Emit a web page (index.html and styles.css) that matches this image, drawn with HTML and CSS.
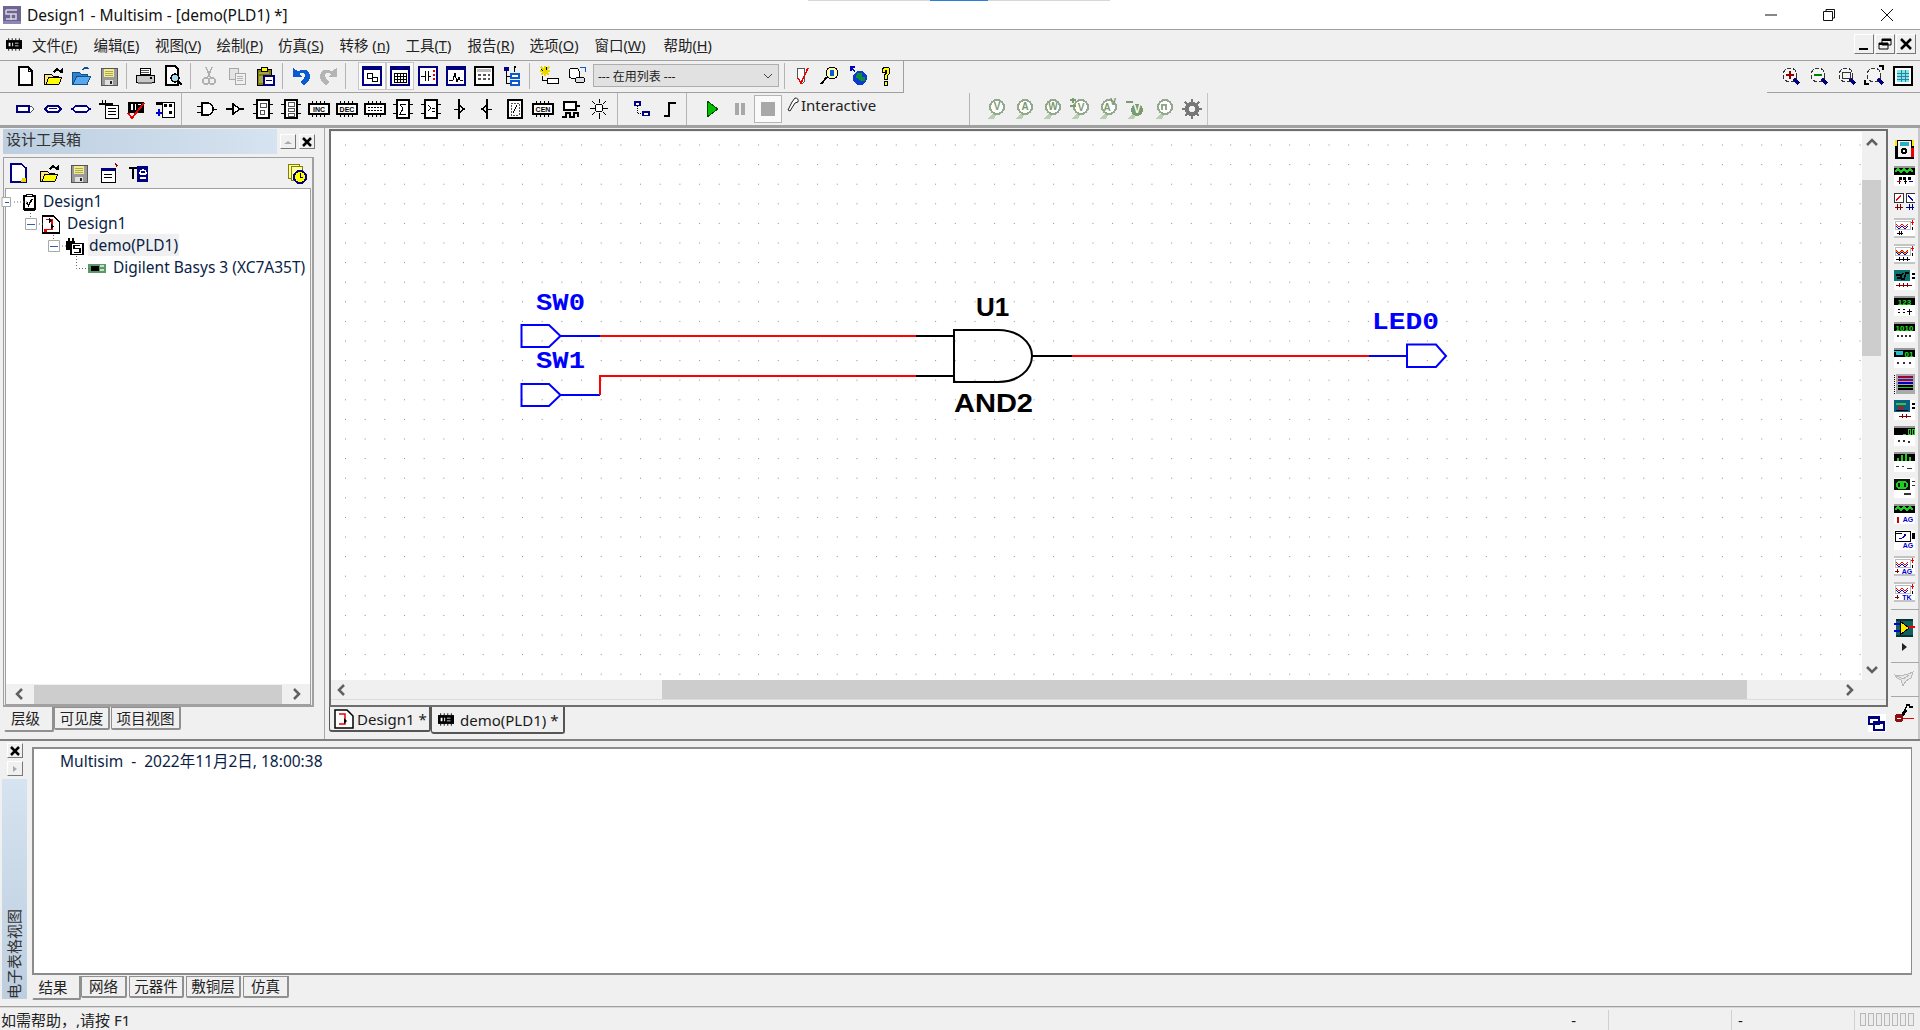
FILE: index.html
```html
<!DOCTYPE html>
<html lang="zh-CN">
<head>
    <meta charset="UTF-8">
    <title>Design1 - Multisim - [demo(PLD1) *]</title>
    <link rel="stylesheet" href="styles.css">
</head>
<body>
    <!-- shared toolbar glyphs -->
    <svg class="icon-defs" width="0" height="0">
        <symbol id="i-new" viewBox="0 0 22 22"><path d="M5 2h9l4 4v14H5z" fill="#fff" stroke="#000" stroke-width="1.5"/><path d="M14 2v4h4" fill="none" stroke="#000"/></symbol>
        <symbol id="i-open" viewBox="0 0 22 22"><path d="M2 9h7l2 2h5v8H2z" fill="#ffe680" stroke="#000"/><path d="M4 19l3-7h13l-3 7z" fill="#ffff00" stroke="#000"/><path d="M11 6l4-3 3 2 3-2v5h-4l1-1-3-1-3 2z" fill="#000"/></symbol>
        <symbol id="i-open-blue" viewBox="0 0 22 22"><path d="M2 7h7l2 2h6v10H2z" fill="#2f7fd0" stroke="#10508c"/><path d="M3 19l4-8h14l-4 8z" fill="#58a8f0" stroke="#10508c"/><path d="M12 5q4-4 7-1" fill="none" stroke="#10508c" stroke-width="1.5"/></symbol>
        <symbol id="i-save" viewBox="0 0 22 22"><path d="M3 3h16v17H3z" fill="#9a9a9a" stroke="#555"/><path d="M6 4h10v8H6z" fill="#f2ee90"/><path d="M7 6h8M7 8h8M7 10h8" stroke="#b0a850"/><path d="M7 15h8v5H7z" fill="#e0e0e0"/><path d="M12 16h2v3h-2z" fill="#222"/></symbol>
        <symbol id="i-print" viewBox="0 0 22 22"><path d="M6 3h10v6H6z" fill="#fff" stroke="#000"/><path d="M2 10h18v7H2z" fill="#c8c8c8" stroke="#000"/><path d="M4 17h14v2H4z" fill="#777"/><path d="M7 5h8M7 7h8" stroke="#555"/><path d="M16 12h2v2h-2z" fill="#000"/></symbol>
        <symbol id="i-preview" viewBox="0 0 22 22"><path d="M4 1h9l3 3v16H4z" fill="#fff" stroke="#000" stroke-width="1.5"/><circle cx="13" cy="13" r="4" fill="#a8d8f0" stroke="#000" stroke-width="1.5"/><path d="M16 16l4 4" stroke="#000" stroke-width="2"/></symbol>
        <symbol id="i-cut" viewBox="0 0 22 22"><path d="M8 2l4 10M14 2l-4 10" stroke="#b0b0b0" stroke-width="1.5"/><circle cx="8" cy="16" r="3" fill="none" stroke="#b0b0b0" stroke-width="1.5"/><circle cx="14" cy="16" r="3" fill="none" stroke="#b0b0b0" stroke-width="1.5"/></symbol>
        <symbol id="i-copy" viewBox="0 0 22 22"><path d="M3 3h9v11H3z" fill="#e4e4e4" stroke="#a8a8a8"/><path d="M9 8h10v11H9z" fill="#f0f0f0" stroke="#a8a8a8"/><path d="M11 11h6M11 13h6M11 15h6" stroke="#b4b4b4"/></symbol>
        <symbol id="i-paste" viewBox="0 0 22 22"><path d="M3 4h14v16H3z" fill="#808000" stroke="#000"/><path d="M7 2h6v4H7z" fill="#ffff00" stroke="#000"/><path d="M5 7h10v2H5zM5 11h5v7H5z" fill="#a6a650"/><path d="M10 11h10v9H10z" fill="#fff" stroke="#000080" stroke-width="2"/><path d="M12 15h6" stroke="#000080"/></symbol>
        <path id="p-undo" d="M3 3v9h9l-3-3q5-3 6 1 0 4-5 7l4 3q7-4 6-10-2-8-12-4z"/>
        <symbol id="i-undo" viewBox="0 0 22 22"><use href="#p-undo" fill="#0a5ad2"/></symbol>
        <symbol id="i-redo" viewBox="0 0 22 22"><use href="#p-undo" fill="#b4b4b4" transform="matrix(-1 0 0 1 22 0)"/></symbol>
        <symbol id="i-frame" viewBox="0 0 22 22"><path d="M2 2h18v18H2z" fill="#fff" stroke="#000080" stroke-width="2"/><path d="M2 2h18v3H2z" fill="#000080"/></symbol>
        <symbol id="i-zoom" viewBox="0 0 22 22"><circle cx="10" cy="10" r="7" fill="#f4f4f4" stroke="#333" stroke-dasharray="4 2"/><path d="M14 14l5 5" stroke="#000080" stroke-width="3"/></symbol>
        <symbol id="i-bus" viewBox="0 0 22 22"><path d="M3 8h14l3 3-3 3H3z" fill="#fff" stroke="#555"/><path d="M3 8h12v6H3z" fill="none" stroke="#000080" stroke-width="2"/></symbol>
        <symbol id="i-box" viewBox="0 0 22 22"><path d="M5 2h12v18H5z" fill="#fff" stroke="#000" stroke-width="1.5"/><path d="M1 6h4M1 15h4M17 6h4M17 15h4" stroke="#000"/></symbol>
        <symbol id="i-chip" viewBox="0 0 22 22"><path d="M1 6h20v10H1z" fill="#fff" stroke="#000" stroke-width="1.5"/><path d="M4 3v3M8 3v3M12 3v3M16 3v3M4 16v3M8 16v3M12 16v3M16 16v3" stroke="#000"/></symbol>
        <symbol id="i-mos" viewBox="0 0 22 22"><path d="M11 1v20M11 7l5 4-5 4" fill="none" stroke="#000" stroke-width="1.5"/><path d="M6 11h5" stroke="#000"/></symbol>
        <symbol id="i-probe" viewBox="0 0 22 22"><path d="M2 21l5-5h5l-3 5z" fill="#b6d0b0"/><circle cx="12" cy="9" r="7" fill="#fff" stroke="#94a890" stroke-width="2"/></symbol>
        <symbol id="i-wave" viewBox="0 0 21 20"><path d="M0 0h21v20H0z" fill="#fff"/><path d="M0 0h21v2H0zM0 18h21v2H0z" fill="#c4c4c4"/><path d="M1 3h15v8H1z" fill="#fff" stroke="#bbb"/><path d="M2 6l3 3 3-3 3 3 3-3" fill="none" stroke="#e00" stroke-width="1"/><path d="M2 8l3 3 3-3 3 3 3-3" fill="none" stroke="#00c"/><path d="M17 4h3v1h-3zM18 2h1v5h-1z" fill="#e00"/><path d="M18 9h1v3h-1z" fill="#000"/></symbol>
        <symbol id="i-scope" viewBox="0 0 21 20"><path d="M0 0h21v20H0z" fill="#fff"/><path d="M0 0h21v2H0z" fill="#999"/><path d="M0 2h21v7H0z" fill="#000"/></symbol>
    </svg>

    <div class="title-tick"><span></span></div>

    <header class="titlebar">
        <svg class="app-icon" viewBox="0 0 18 18"><path d="M0 0h18v18H0z" fill="#6e6690"/><path d="M3 4h11M3 4v4h10v5H3M8 8v6" fill="none" stroke="#d8d6e6" stroke-width="1.5"/><path d="M0 15h18v3H0z" fill="#8e86b4"/></svg>
        <span class="title-text">Design1 - Multisim - [demo(PLD1) *]</span>
        <div class="win-buttons">
            <svg viewBox="0 0 14 14"><path d="M1 7h12" stroke="#111"/></svg>
            <svg viewBox="0 0 14 14"><path d="M1.500 3.500h9v9h-9zM4 3V1.500h8.500V10H11" fill="none" stroke="#111"/></svg>
            <svg viewBox="0 0 14 14"><path d="M1 1l12 12M13 1L1 13" stroke="#111"/></svg>
        </div>
    </header>

    <nav class="menubar">
        <svg class="menu-icon" viewBox="0 0 18 14"><path d="M0 2h18v10H0z" fill="#000"/><path d="M3 0v2M7 0v2M11 0v2M15 0v2M3 12v2M7 12v2M11 12v2M15 12v2" stroke="#000"/><path d="M3 5h2v4H3zM7 5h1v4H7zM10 5h4v1h-4zM10 8h4v1h-4z" fill="#fff"/></svg>
        <span class="menu-item">文件(<u>F</u>)</span>
        <span class="menu-item">编辑(<u>E</u>)</span>
        <span class="menu-item">视图(<u>V</u>)</span>
        <span class="menu-item">绘制(<u>P</u>)</span>
        <span class="menu-item">仿真(<u>S</u>)</span>
        <span class="menu-item w66">转移 (<u>n</u>)</span>
        <span class="menu-item w62">工具(<u>T</u>)</span>
        <span class="menu-item w62">报告(<u>R</u>)</span>
        <span class="menu-item w65">选项(<u>O</u>)</span>
        <span class="menu-item w69">窗口(<u>W</u>)</span>
        <span class="menu-item">帮助(<u>H</u>)</span>
        <div class="mdi-buttons">
            <button><svg viewBox="0 0 16 14"><path d="M3 11h9v2H3z" fill="#000"/></svg></button>
            <button><svg viewBox="0 0 16 14"><path d="M5 2h9v6h-9zM2 6h9v6H2z" fill="#f0f0f0" stroke="#000"/><path d="M5 2h9v2h-9zM2 6h9v2H2z" fill="#000"/></svg></button>
            <button><svg viewBox="0 0 16 14"><path d="M3 2l10 10M13 2L3 12" stroke="#000" stroke-width="2.500"/></svg></button>
        </div>
    </nav>

    <div class="tool-row">
        <div class="toolstrip strip-main">
            <span class="tb"><svg><use href="#i-new"/></svg></span>
            <span class="tb"><svg><use href="#i-open"/></svg></span>
            <span class="tb"><svg><use href="#i-open-blue"/></svg></span>
            <span class="tb"><svg><use href="#i-save"/></svg></span>
            <span class="sep"></span>
            <span class="tb"><svg><use href="#i-print"/></svg></span>
            <span class="tb"><svg><use href="#i-preview"/></svg></span>
            <span class="sep"></span>
            <span class="tb"><svg><use href="#i-cut"/></svg></span>
            <span class="tb"><svg><use href="#i-copy"/></svg></span>
            <span class="tb"><svg><use href="#i-paste"/></svg></span>
            <span class="sep"></span>
            <span class="tb"><svg><use href="#i-undo"/></svg></span>
            <span class="tb"><svg><use href="#i-redo"/></svg></span>
            <span class="sep sep-wide"></span>
            <span class="tb pressed"><svg><use href="#i-frame"/><path d="M6 8h5v5H6zM11 12h5v4h-5z" fill="none" stroke="#000"/></svg></span>
            <span class="tb pressed"><svg><use href="#i-frame"/><path d="M5 8h12v9H5zM5 11h12M5 14h12M8 8v9M11 8v9M14 8v9" fill="none" stroke="#000"/></svg></span>
            <span class="tb"><svg><path d="M2 2h18v18H2z" fill="#fff" stroke="#000080" stroke-width="2"/><path d="M8 6v10M11 6v10M4 11h4M11 11h3" stroke="#000"/><path d="M16 5h2v2h-2zM16 9h2v2h-2zM16 13h2v2h-2z" fill="#e00"/></svg></span>
            <span class="tb"><svg><use href="#i-frame"/><path d="M4 15h4l2-7 2 9 2-5 1 3h3" fill="none" stroke="#000"/></svg></span>
            <span class="tb"><svg><path d="M2 2h18v18H2z" fill="#fff" stroke="#000" stroke-width="2"/><path d="M4 4h14v3H4z" fill="#bbb"/><path d="M5 9h3v2H5zM10 9h3v2h-3zM15 9h2v2h-2zM5 13h3v2H5zM10 13h3v2h-3zM15 13h2v2h-2z" fill="#555"/></svg></span>
            <span class="tb"><svg><path d="M3 2h5v4H3z" fill="#000080"/><path d="M5 6v12h5M5 11h5" fill="none" stroke="#000"/><path d="M10 9h8v4h-8zM10 16h8v4h-8z" fill="#fff" stroke="#0a5ad2" stroke-width="1.500"/><path d="M13 2v5M15 2l-2-1v3z" stroke="#000"/></svg></span>
            <span class="sep sep-combo"></span>
            <span class="tb"><svg><path d="M2 6h10M7 1v10M3 2l8 8M11 2l-8 8" stroke="#e8d800" stroke-width="1.500"/><path d="M3 4l2 2M8 2v3" stroke="#000"/><path d="M9 13h11v5H9z" fill="#fff" stroke="#000"/><path d="M4 11v4h5" fill="none" stroke="#000"/></svg></span>
            <span class="tb"><svg><ellipse cx="8" cy="6" rx="5" ry="3" fill="#fff" stroke="#000"/><path d="M3 6v6q5 4 10 0V6" fill="#fff" stroke="#000"/><ellipse cx="14" cy="15" rx="5" ry="3" fill="#ddd" stroke="#000"/><path d="M14 2h5v5" fill="none" stroke="#0a5ad2"/></svg></span>
            <span class="combo"><span>--- 在用列表 ---</span><svg viewBox="0 0 10 6"><path d="M1 1l4 4 4-4" fill="none" stroke="#444"/></svg></span>
            <span class="sep sep-tight"></span>
            <span class="tb"><svg><path d="M6 3h8l-1 8 1 5-3 3-4-5z" fill="#fff" stroke="#555"/><path d="M7 13l3 5 7-15" fill="none" stroke="#e00" stroke-width="1.500"/></svg></span>
            <span class="tb"><svg><circle cx="13" cy="8" r="6" fill="#ffffb0" stroke="#000"/><path d="M11 5h4v6h-4z" fill="#0a5ad2"/><path d="M8 12l-6 7" stroke="#000" stroke-width="2"/></svg></span>
            <span class="tb"><svg><circle cx="13" cy="13" r="7" fill="#0a3ad0"/><path d="M10 8h5v4h3v4h-5l-2-3h-2z" fill="#0a9030"/><path d="M3 2l5 4M4 6V2h4" fill="none" stroke="#0000c0" stroke-width="1.500"/></svg></span>
            <span class="tb"><svg><path d="M7 7q0-5 4-5t4 4q0 3-3 5v3h-3v-4q3-1 3-4 0-1-1-1t-1 2zM9 16h3v4H9z" fill="#ffff00" stroke="#000"/></svg></span>
        </div>
        <div class="toolstrip strip-zoom">
            <span class="tb"><svg><use href="#i-zoom"/><path d="M6 9h8v2H6zM9 6h2v8H9z" fill="#900000"/></svg></span>
            <span class="tb"><svg><use href="#i-zoom"/><path d="M6 9h8v2H6z" fill="#008000"/></svg></span>
            <span class="tb"><svg><use href="#i-zoom"/><path d="M6 7h8v6H6z" fill="none" stroke="#333"/></svg></span>
            <span class="tb"><svg><use href="#i-zoom"/><path d="M1 15v4h4M15 1h4v4" fill="none" stroke="#000" stroke-width="1.500"/></svg></span>
            <span class="tb"><svg><path d="M2 2h18v18H2z" fill="#fff" stroke="#000" stroke-width="2"/><path d="M5 5h12v12H5z" fill="#7ce8ec"/><path d="M5 8h12M5 11h12M5 14h12M9 5v12M13 5v12" stroke="#3080a0"/></svg></span>
        </div>
    </div>

    <div class="tool-row">
        <div class="toolstrip strip-place">
            <span class="tb"><svg><use href="#i-bus"/></svg></span>
            <span class="tb"><svg><path d="M3 11l3-3h10l3 3-3 3H6z" fill="#fff" stroke="#000080" stroke-width="1.500"/><path d="M7 10h8" stroke="#000080"/></svg></span>
            <span class="tb"><svg><path d="M2 11l4-3h10l4 3-4 3H6z" fill="#fff" stroke="#000080" stroke-width="1.500"/></svg></span>
            <span class="tb"><svg><path d="M1 5h14v2H1z" fill="#000"/><path d="M7 7h13v13H7z" fill="#fff" stroke="#000"/><path d="M10 10h8M10 13h8M10 16h8" stroke="#000"/><path d="M4 2v3M7 2v3" stroke="#000"/></svg></span>
            <span class="tb"><svg><path d="M2 4h16v11H2z" fill="#000"/><path d="M5 6h2v6H5zM9 6h1v6H9zM12 6h3v1h-3zM12 10h3v1h-3z" fill="#fff"/><path d="M2 15l4 5 12-15" fill="none" stroke="#e00" stroke-width="2"/></svg></span>
            <span class="tb"><svg><path d="M8 4h12v15H8z" fill="#fff" stroke="#000"/><path d="M2 4h6v3H2zM10 6h3v3h-3zM15 6h3v3h-3zM15 13h3v3h-3z" fill="#000"/><path d="M5 11v7M2 15h6" stroke="#0000d0" stroke-width="1.500"/></svg></span>
            <span class="sep sep-gap"></span>
            <span class="tb"><svg><path d="M6 5h5q6 0 6 6t-6 6H6z" fill="#fff" stroke="#000" stroke-width="1.500"/><path d="M1 8h5M1 14h5M17 11h4" stroke="#000"/></svg></span>
            <span class="tb"><svg><path d="M9 6l7 5-7 5z" fill="#fff" stroke="#000" stroke-width="1.500"/><path d="M2 11h7M16 11h4" stroke="#000" stroke-width="1.500"/></svg></span>
            <span class="tb"><svg><use href="#i-box"/><path d="M8 5h6v4H8zM8 12h4v4H8z" fill="none" stroke="#555"/></svg></span>
            <span class="tb"><svg><use href="#i-box"/><path d="M8 4h6v4H8zM8 10h6v3H8zM8 15h6v3H8z" fill="none" stroke="#555"/></svg></span>
            <span class="tb"><svg><use href="#i-chip"/><text class="chip-text" x="11" y="14">INC</text></svg></span>
            <span class="tb"><svg><use href="#i-chip"/><text class="chip-text" x="11" y="14">DEC</text></svg></span>
            <span class="tb"><svg><use href="#i-chip"/><path d="M4 9h14M4 12h14" stroke="#000" stroke-dasharray="2 1"/></svg></span>
            <span class="tb"><svg><use href="#i-box"/><path d="M14 6H8l3 5-3 5h6" fill="none" stroke="#000"/></svg></span>
            <span class="tb"><svg><use href="#i-box"/><path d="M8 7l3 3-3 3M12 10h3M12 13h3" fill="none" stroke="#000"/></svg></span>
            <span class="tb"><svg><use href="#i-mos"/></svg></span>
            <span class="tb"><svg><use href="#i-mos" transform="matrix(-1 0 0 1 22 0)"/></svg></span>
            <span class="tb"><svg><path d="M4 2h14v18H4z" fill="#fff" stroke="#000" stroke-width="1.500"/><path d="M7 5h8v12H7z" fill="none" stroke="#555" stroke-dasharray="2 1"/><path d="M9 15l4-8" stroke="#000"/></svg></span>
            <span class="tb"><svg><use href="#i-chip"/><text class="chip-text" x="11" y="14">CEN</text></svg></span>
            <span class="tb"><svg><path d="M4 4h12v8H4zM16 8h4" fill="#fff" stroke="#000" stroke-width="1.500"/><path d="M2 19h4v-4h4v4h4v-4h4v4" fill="none" stroke="#000" stroke-width="1.500"/></svg></span>
            <span class="tb"><svg><circle cx="11" cy="10" r="4" fill="#fff" stroke="#000"/><path d="M11 1v4M11 15v6M2 10h5M15 10h5M4 3l3 3M18 3l-3 3M4 17l3-3M18 17l-3-3" stroke="#000"/></svg></span>
            <span class="sep sep-gap2"></span>
            <span class="tb"><svg><path d="M3 3h7v5H3z" fill="#000080"/><path d="M5 5h3v2H5z" fill="#fff"/><path d="M11 13h8v5h-8z" fill="#000080"/><path d="M13 15h4v2h-4z" fill="#fff"/><path d="M6 8v7h5" fill="none" stroke="#000" stroke-dasharray="1 1"/></svg></span>
            <span class="tb"><svg><path d="M5 18h5V5h7" fill="none" stroke="#000" stroke-width="2.500"/></svg></span>
            <span class="sep sep-gap"></span>
            <span class="tb"><svg><path d="M6 3l11 8-11 8z" fill="#00c000" stroke="#005000"/></svg></span>
            <span class="tb"><svg><path d="M6 5h4v12H6zM12 5h4v12h-4z" fill="#a8a8a8"/></svg></span>
            <span class="tb pressed stop"><svg><path d="M4 4h14v14H4z" fill="#a8a8a8"/></svg></span>
            <span class="interactive">
                <svg viewBox="0 0 14 16"><path d="M9 1q4 0 3 4l-3 1-5 8-2-1 4-8z" fill="#fff" stroke="#222"/></svg>
                <span>Interactive</span>
            </span>
            <span class="sep sep-gap3"></span>
            <span class="tb"><svg><use href="#i-probe"/><text class="probe-text" x="12" y="12">V</text></svg></span>
            <span class="tb"><svg><use href="#i-probe"/><text class="probe-text" x="12" y="12">A</text></svg></span>
            <span class="tb"><svg><use href="#i-probe"/><text class="probe-text" x="12" y="12">W</text></svg></span>
            <span class="tb"><svg><use href="#i-probe"/><text class="probe-text" x="12" y="13">V</text><path d="M1 2h6M4 0v5M1 8h6" stroke="#7a9a70" stroke-width="1.500"/></svg></span>
            <span class="tb"><svg><use href="#i-probe"/><text class="probe-text" x="10" y="13">A</text><text class="probe-text" x="16" y="7">V</text></svg></span>
            <span class="tb"><svg><path d="M2 21l5-5h5l-3 5z" fill="#b6d0b0"/><circle cx="12" cy="12" r="6" fill="#7a9a70"/><text class="probe-text light" x="12" y="15">V</text><path d="M1 4h7" stroke="#7a9a70" stroke-width="1.500"/></svg></span>
            <span class="tb"><svg><use href="#i-probe"/><path d="M9 12V7h4v5" fill="none" stroke="#94a890" stroke-width="1.500"/></svg></span>
            <span class="tb"><svg><circle cx="11" cy="11" r="5" fill="none" stroke="#777" stroke-width="4"/><path d="M11 1v4M11 17v4M1 11h4M17 11h4M4 4l3 3M18 4l-3 3M4 18l3-3M18 18l-3-3" stroke="#777" stroke-width="2.500"/></svg></span>
        </div>
    </div>

    <main class="workspace">
        <aside class="toolbox">
            <div class="toolbox-head">
                <div class="toolbox-title">设计工具箱</div>
                <button class="mini disabled"><svg viewBox="0 0 12 10"><path d="M2 7l4-3 4 3z" fill="#aaa"/></svg></button>
                <button class="mini"><svg viewBox="0 0 12 10"><path d="M2 1l8 8M10 1L2 9" stroke="#000" stroke-width="2.500"/></svg></button>
            </div>
            <div class="toolbox-box">
                <div class="toolbox-icons">
                    <span class="tb"><svg><path d="M3 2h10l5 4v14H3z" fill="#fff" stroke="#000080" stroke-width="1.500"/><path d="M14 16h4v4h-5z" fill="#e8d800"/></svg></span>
                    <span class="tb"><svg><use href="#i-open"/></svg></span>
                    <span class="tb"><svg><use href="#i-save"/></svg></span>
                    <span class="tb"><svg><path d="M3 6h14v14H3z" fill="#fff" stroke="#000"/><path d="M3 6h14v3H3z" fill="#000080"/><path d="M6 12h8M6 15h8" stroke="#000"/><path d="M17 1l3 3-2 1z" fill="#a00000"/></svg></span>
                    <span class="tb"><svg><path d="M9 4h11v16H9z" fill="#000080"/><path d="M1 5h8v2H6v10H4V7H1z" fill="#000"/><path d="M12 12h6M12 12q0-4 3-4t3 4M18 16h-6" fill="none" stroke="#fff" stroke-width="1.500"/></svg></span>
                    <span class="tb tb-end"><svg><path d="M2 2h11v14H2z" fill="#ffffa0" stroke="#808000"/><path d="M5 4h11v14H5z" fill="#ffffa0" stroke="#808000"/><circle cx="14" cy="15" r="6" fill="#ffff00" stroke="#000080" stroke-width="2"/><path d="M14 11v4h3" fill="none" stroke="#000"/></svg></span>
                </div>
                <div class="tree">
                    <svg class="tree-lines" width="120" height="100">
                        <path class="dots" d="M8 14h14M24.500 25v5M30 36h9M47.500 47v5M53 58h9M70.500 68v12.500h14"/>
                        <path class="exp" d="M-4 9.500h8.500v9H-4zM19.500 30.500h11v11h-11zM42.500 52.500h11v11h-11z"/>
                        <path class="minus" d="M-1 14.500h4M21 36.500h8M44 58.500h8"/>
                    </svg>
                    <div class="tree-row lv0">
                        <svg viewBox="0 0 18 20"><path d="M3 3h12v14H3z" fill="#fff" stroke="#000" stroke-width="1.500"/><path d="M6 1h6v3H6z" fill="#fff" stroke="#000"/><path d="M3 17h12v2H3z" fill="#000"/><path d="M6 10l2 3 4-7" fill="none" stroke="#000" stroke-width="1.500"/></svg>
                        <span>Design1</span>
                    </div>
                    <div class="tree-row lv1">
                        <svg viewBox="0 0 20 20"><path d="M1 1h12l6 6v12H1z" fill="#fff" stroke="#000" stroke-width="1.500"/><path d="M5 5h6v10H5" fill="none" stroke="#e00" stroke-width="1.500"/><path d="M8 3l3 3-3 3zM10 9l3 3-3 3z" fill="#000"/><path d="M3 15h3v3H3z" fill="#e00"/></svg>
                        <span>Design1</span>
                    </div>
                    <div class="tree-row lv2 selected">
                        <svg viewBox="0 0 18 18"><path d="M0 3h9v9H0z" fill="#000"/><path d="M3 0v3M7 0v3" stroke="#000" stroke-width="1.500"/><path d="M5 6h12v11H5z" fill="#fff" stroke="#000" stroke-width="1.500"/><path d="M14 8H8v3h6v4H8" fill="none" stroke="#000" stroke-width="1.500"/></svg>
                        <span>demo(PLD1)</span>
                    </div>
                    <div class="tree-row lv3">
                        <svg viewBox="0 0 20 14"><path d="M0 2h20v11H0z" fill="#5a9a6a"/><path d="M3 5h9v6H3z" fill="#000"/><path d="M14 4h4v2h-4zM14 8h4v2h-4z" fill="#c8e0c0"/></svg>
                        <span>Digilent Basys 3 (XC7A35T)</span>
                    </div>
                    <div class="h-scroll tree-scroll">
                        <svg class="arrow" viewBox="0 0 10 14"><path d="M8 2L3 7l5 5" fill="none" stroke="#606060" stroke-width="2.500"/></svg>
                        <div class="thumb"></div>
                        <svg class="arrow" viewBox="0 0 10 14"><path d="M2 2l5 5-5 5" fill="none" stroke="#606060" stroke-width="2.500"/></svg>
                    </div>
                </div>
            </div>
            <div class="sheet-tabs toolbox-tabs">
                <span class="tab active">层级</span>
                <span class="tab">可见度</span>
                <span class="tab">项目视图</span>
            </div>
        </aside>

        <section class="editor">
            <div class="canvas-frame">
                <svg class="canvas" width="1531" height="548">
                    <defs>
                        <pattern id="grid-dots" x="14" y="12.500" width="19.670" height="19.600" patternUnits="userSpaceOnUse">
                            <rect width="1" height="1" fill="#8c8c8c"/>
                        </pattern>
                    </defs>
                    <rect width="1531" height="548" fill="#fff"/>
                    <rect width="1531" height="548" fill="url(#grid-dots)"/>
                    <g transform="translate(-331 -132)" fill="none" stroke-width="2">
                        <path d="M521.500 325H549L560.500 336 549 347H521.500zM521.500 384H549L560.500 395 549 406H521.500zM1407 344.500H1436L1446 356 1436 367H1407z" stroke="#0000ff"/>
                        <path d="M560 336H600M560 395H600M1369 356H1407" stroke="#0000ff"/>
                        <path d="M600 336H916M600 395V376H916M1072 356H1369" stroke="#ff0000"/>
                        <path d="M916 336H954M916 376H954M1032 356H1072" stroke="#000"/>
                        <path d="M954 330H998C1018 330 1032 342 1032 356S1018 382 998 382H954Z" stroke="#000"/>
                        <g class="net-label">
                            <text x="536" y="310" textLength="49" lengthAdjust="spacingAndGlyphs">SW0</text>
                            <text x="536" y="368" textLength="49" lengthAdjust="spacingAndGlyphs">SW1</text>
                            <text x="1372" y="329" textLength="67" lengthAdjust="spacingAndGlyphs">LED0</text>
                        </g>
                        <g class="part-label">
                            <text x="976" y="316">U1</text>
                            <text x="954" y="412" textLength="79" lengthAdjust="spacingAndGlyphs">AND2</text>
                        </g>
                    </g>
                </svg>
                <div class="v-scroll">
                    <svg class="arrow" viewBox="0 0 14 10"><path d="M2 8l5-5 5 5" fill="none" stroke="#606060" stroke-width="2.500"/></svg>
                    <div class="thumb"></div>
                    <svg class="arrow arrow-down" viewBox="0 0 14 10"><path d="M2 2l5 5 5-5" fill="none" stroke="#606060" stroke-width="2.500"/></svg>
                </div>
                <div class="h-scroll canvas-scroll">
                    <svg class="arrow" viewBox="0 0 10 14"><path d="M8 2L3 7l5 5" fill="none" stroke="#606060" stroke-width="2.500"/></svg>
                    <div class="thumb"></div>
                    <svg class="arrow" viewBox="0 0 10 14"><path d="M2 2l5 5-5 5" fill="none" stroke="#606060" stroke-width="2.500"/></svg>
                </div>
            </div>
            <div class="sheet-tabs design-tabs">
                <span class="doc-tab">
                    <svg viewBox="0 0 20 20"><path d="M1 1h12l6 6v12H1z" fill="#fff" stroke="#000" stroke-width="1.500"/><path d="M5 5h6v10H5" fill="none" stroke="#e00" stroke-width="1.500"/><path d="M10 9l3 3-3 3z" fill="#000"/></svg>
                    Design1 *
                </span>
                <span class="doc-tab active">
                    <svg viewBox="0 0 18 14"><path d="M0 2h18v10H0z" fill="#000"/><path d="M3 0v2M7 0v2M11 0v2M15 0v2M3 12v2M7 12v2M11 12v2M15 12v2" stroke="#000"/><path d="M3 5h2v4H3zM7 5h1v4H7zM10 5h4v1h-4zM10 8h4v1h-4z" fill="#fff"/></svg>
                    demo(PLD1) *
                </span>
                <span class="cascade">
                    <svg viewBox="0 0 18 18"><path d="M1 3h10v7H1zM6 8h10v8H6z" fill="#fff" stroke="#000080" stroke-width="2"/><path d="M1 3h10v2H1zM6 8h10v2H6z" fill="#000080"/></svg>
                </span>
            </div>
        </section>

        <aside class="instruments">
            <span class="inst"><svg viewBox="0 0 21 20"><path d="M1 0h19v19H1z" fill="#000"/><path d="M1 0h2v6H1z" fill="#ffe800"/><path d="M18 0h2v6h-2z" fill="#ffe800"/><path d="M4 1h13v16H4z" fill="#f4f4f4"/><path d="M6 2h9v4H6z" fill="#2ab0c0"/><circle cx="10" cy="11" r="3" fill="#000"/><circle cx="10" cy="11" r="1" fill="#fff"/><path d="M17 8h3v9h-3z" fill="#e00"/></svg></span>
            <span class="inst"><svg viewBox="0 0 21 20"><use href="#i-scope"/><path d="M1 6l3-3 3 3 3-3 3 3 3-3 3 3" fill="none" stroke="#20d020" stroke-width="2"/><path d="M5 11h2v2H5zM9 11h2v2H9zM14 11h2v2h-2zM3 15h4M5 14v4M10 15h3M11 14v4" stroke="#000"/><path d="M3 15h4v1H3z" fill="#e00"/><path d="M15 15h4v1h-4z" fill="#0000c0"/></svg></span>
            <span class="inst"><svg viewBox="0 0 21 20"><path d="M0 1h9v9H0zM12 1h9v9h-9z" fill="#fff" stroke="#333"/><path d="M2 8l5-4" stroke="#e00" stroke-width="1.500"/><path d="M14 4l5 4" stroke="#0000c0" stroke-width="1.500"/><path d="M1 15h8M3 12v6M6 12v6" stroke="#800000"/><path d="M12 15h8M15 12v6M18 12v6" stroke="#000080"/></svg></span>
            <span class="inst"><svg viewBox="0 0 21 20"><use href="#i-wave"/><path d="M3 15h6M5 13v4M7 13v4" stroke="#000"/></svg></span>
            <span class="inst"><svg viewBox="0 0 21 20"><use href="#i-wave"/><path d="M2 7l3 3 3-3 3 3 3-3" fill="none" stroke="#d0b000"/><path d="M2 15h14M5 13v4M9 13v4M13 13v4" stroke="#000"/></svg></span>
            <span class="inst"><svg viewBox="0 0 21 20"><path d="M0 0h21v20H0z" fill="#fff"/><path d="M0 0h16v11H0z" fill="#0a7070"/><path d="M2 5h4l2 4h2l2-6h3M3 8h3l3-5" fill="none" stroke="#000" stroke-width="1.500"/><path d="M18 3h3v2h-3zM18 7h3v2h-3z" fill="#000"/><path d="M2 15h16M5 13v4M9 13v4M13 13v4" stroke="#800000"/></svg></span>
            <span class="inst"><svg viewBox="0 0 21 20"><use href="#i-scope"/><text class="inst-digits" x="10.500" y="9">123</text><path d="M4 13h2v1H4zM4 16h2v1H4zM9 13h2v1H9zM9 16h2v1H9zM15 13h1v6h-1zM13 15h5v1h-5z" fill="#000"/></svg></span>
            <span class="inst"><svg viewBox="0 0 21 20"><use href="#i-scope"/><text class="inst-digits" x="10.500" y="9">1010</text><path d="M3 13h2v2H3zM7 13h2v2H7zM11 13h2v2h-2zM15 13h2v2h-2z" fill="#333"/></svg></span>
            <span class="inst"><svg viewBox="0 0 21 20"><use href="#i-scope"/><path d="M2 3h7v4H2z" fill="#20c0d0"/><path d="M0 3h3" stroke="#20c0d0"/><text class="inst-digits" x="15" y="9">01</text><path d="M3 14h2v2H3zM9 14h2v2H9zM15 14h2v2h-2z" fill="#333"/></svg></span>
            <span class="inst"><svg viewBox="0 0 21 20"><path d="M2 0h19v20H2z" fill="#aaa"/><path d="M4 2h15v5H4z" fill="#a00040"/><path d="M4 4h15" stroke="#40c0f0"/><path d="M4 8h15v2H4z" fill="#0000c0"/><path d="M4 11h15v5H4z" fill="#000"/><path d="M4 13h15" stroke="#20d020"/><path d="M0 1v19" stroke="#000" stroke-dasharray="1 1"/></svg></span>
            <span class="inst"><svg viewBox="0 0 21 20"><path d="M0 0h21v20H0z" fill="#fff"/><path d="M0 0h16v12H0z" fill="#0a6080"/><path d="M2 3h10v2H2z" fill="#40c040"/><path d="M4 7h6v2H4z" fill="#e00"/><path d="M2 10h12" stroke="#000"/><path d="M18 3h3v2h-3zM18 7h3v2h-3z" fill="#000"/><path d="M5 16h12M8 14v4M12 14v4" stroke="#800000"/></svg></span>
            <span class="inst"><svg viewBox="0 0 21 20"><use href="#i-scope"/><path d="M9 8h3M14 3h2v5h-2zM18 3h2v5h-2z" stroke="#20d020" fill="none"/><path d="M4 14h2v2H4zM9 14h2v2H9zM14 15h2v2h-2z" fill="#333"/></svg></span>
            <span class="inst"><svg viewBox="0 0 21 20"><use href="#i-scope"/><path d="M3 9V6h2v3zM7 9V3h2v6zM11 9V2h2v7zM15 9V5h2v4z" fill="#20d020"/><path d="M2 14h3M8 14h2M13 16h5" stroke="#333"/></svg></span>
            <span class="inst"><svg viewBox="0 0 21 20"><path d="M0 0h21v20H0z" fill="#fff"/><path d="M0 1h16v11H0z" fill="#111"/><circle cx="6" cy="7" r="3" fill="none" stroke="#20d020" stroke-width="1.500"/><circle cx="10" cy="7" r="3" fill="none" stroke="#20d020" stroke-width="1.500"/><path d="M18 3h3v1h-3zM18 7h3v1h-3z" fill="#333"/><path d="M10 16h7" stroke="#333" stroke-width="2"/></svg></span>
            <span class="inst"><svg viewBox="0 0 21 20"><use href="#i-scope"/><path d="M1 6l3-3 3 3 3-3 3 3 3-3 3 3" fill="none" stroke="#20d020" stroke-width="1.500"/><path d="M4 13v6" stroke="#c00" stroke-width="1.500"/><text class="inst-tag" x="14" y="18">AG</text></svg></span>
            <span class="inst"><svg viewBox="0 0 21 20"><path d="M0 0h21v20H0z" fill="#fff"/><path d="M1 1h15v10H1z" fill="#fff" stroke="#000"/><path d="M2 3h6M5 9q4 0 6-5" fill="none" stroke="#000"/><path d="M5 9q4 0 7-5" fill="none" stroke="#0000c0"/><path d="M18 3h3v6h-3z" fill="#000"/><text class="inst-tag" x="14" y="18">AG</text></svg></span>
            <span class="inst"><svg viewBox="0 0 21 20"><use href="#i-wave"/><path d="M1 15h4M3 13v4" stroke="#800000"/><text class="inst-tag" x="13" y="18">AG</text></svg></span>
            <span class="inst"><svg viewBox="0 0 21 20"><use href="#i-wave"/><path d="M1 15h4M3 13v4" stroke="#800000"/><text class="inst-tag" x="13" y="18">TK</text></svg></span>
            <span class="inst-sep"></span>
            <span class="inst inst-labview"><svg viewBox="0 0 21 18"><path d="M2 0h17v18H2z" fill="#106060"/><path d="M2 0h17v2H2zM2 16h17v2H2z" fill="#000" opacity=".5"/><path d="M0 5h7M0 12h7" stroke="#0000e0" stroke-width="2"/><path d="M14 8h7" stroke="#e00" stroke-width="2"/><path d="M6 2l9 7-9 7z" fill="#ffe800" stroke="#000"/></svg></span>
            <svg class="inst-arrow" viewBox="0 0 5 8"><path d="M0 0l5 4-5 4z" fill="#222"/></svg>
            <span class="inst-sep"></span>
            <span class="inst inst-short"><svg viewBox="0 0 21 16"><path d="M1 4l5 1 8-2 5-2-2 6-5 3-3 5-2-6-4-2z" fill="#e8e8e8" stroke="#b8b8b8"/><path d="M3 5l6 3 6-4" fill="none" stroke="#b8b8b8"/></svg></span>
            <span class="inst-sep"></span>
            <span class="inst inst-probe"><svg viewBox="0 0 21 20"><path d="M6 14l5-7 2-5h2l1 2h3" fill="none" stroke="#000" stroke-width="1.500"/><path d="M7 12l4-6 2 2-4 6z" fill="#000"/><circle cx="5" cy="15" r="4.500" fill="#8c1010"/><path d="M3 15h4" stroke="#fff"/><path d="M9 15h11" stroke="#e00"/></svg></span>
        </aside>
    </main>

    <section class="lower">
        <div class="lower-side">
            <button class="mini"><svg viewBox="0 0 12 10"><path d="M2 1l8 8M10 1L2 9" stroke="#000" stroke-width="2.500"/></svg></button>
            <button class="mini disabled"><svg viewBox="0 0 12 10"><path d="M4 2l4 3-4 3z" fill="#aaa"/></svg></button>
            <div class="side-title"><span>电子表格视图</span></div>
        </div>
        <div class="lower-main">
            <div class="log-box">Multisim&nbsp; -&nbsp; 2022年11月2日, 18:00:38</div>
            <div class="sheet-tabs log-tabs">
                <span class="tab active t-result">结果</span>
                <span class="tab t-net">网络</span>
                <span class="tab t-3">元器件</span>
                <span class="tab t-3">敷铜层</span>
                <span class="tab t-net">仿真</span>
            </div>
        </div>
    </section>

    <footer class="statusbar">
        <span class="status-help">如需帮助，,请按 F1</span>
        <span class="status-cell c1">-</span>
        <span class="status-cell c2"></span>
        <span class="status-cell c3">-</span>
        <span class="status-cell c4">
            <i></i><i></i><i></i><i></i><i></i><i></i><i></i>
        </span>
    </footer>
</body>
</html>
```

FILE: styles.css
```css
* {
    box-sizing: border-box;
}

html, body {
    margin: 0;
    height: 100%;
}

body {
    width: 1920px;
    height: 1030px;
    overflow: hidden;
    display: flex;
    flex-direction: column;
    position: relative;
    background-color: #f0f0f0;
    color: #1a1a1a;
    font-family: "Noto Sans", "Noto Sans CJK SC", sans-serif;
    font-size: 14px;
}

svg {
    display: block;
}

button {
    padding: 0;
    font: inherit;
}

.icon-defs {
    position: absolute;
}

.title-tick {
    position: absolute;
    left: 808px;
    top: 0;
    width: 302px;
    height: 1px;
    background-color: #d8d8d8;
}

.title-tick span {
    display: block;
    width: 58px;
    height: 1px;
    margin-left: 122px;
    background-color: #2a7fd8;
}

/* title and menu */
.titlebar {
    height: 30px;
    flex: none;
    display: flex;
    align-items: center;
    padding-left: 3px;
    background-color: #fff;
    border-bottom: 1px solid #a0a0a0;
}

.app-icon {
    width: 18px;
    height: 18px;
}

.title-text {
    margin-left: 6px;
    font-size: 15.500px;
    color: #111;
    white-space: nowrap;
}

.win-buttons {
    margin-left: auto;
    display: flex;
    gap: 44px;
    padding-right: 26px;
}

.win-buttons svg {
    width: 14px;
    height: 14px;
}

.menubar {
    height: 31px;
    flex: none;
    display: flex;
    align-items: center;
    padding: 0 0 2px 6px;
    border-bottom: 1px solid #a0a0a0;
}

.menu-icon {
    width: 16px;
    height: 13px;
    margin-right: 10px;
}

.menu-item {
    width: 61.500px;
    flex: none;
    font-size: 14.500px;
    white-space: nowrap;
    color: #222;
}

.menu-item.w62 {
    width: 62px;
}

.menu-item.w65 {
    width: 65px;
}

.menu-item.w66 {
    width: 66px;
}

.menu-item.w69 {
    width: 69px;
}

.mdi-buttons {
    margin-left: auto;
    display: flex;
    gap: 1px;
    padding-right: 4px;
}

.mdi-buttons button {
    width: 20px;
    height: 20px;
    border: 1px solid;
    border-color: #fff #777 #777 #fff;
    background-color: #f0f0f0;
    display: flex;
    align-items: center;
    justify-content: center;
}

.mdi-buttons svg {
    width: 16px;
    height: 14px;
}

/* toolbars */
.tool-row {
    height: 32px;
    flex: none;
    display: flex;
    justify-content: space-between;
}

.toolstrip {
    display: flex;
    align-items: center;
    height: 32px;
    padding-left: 11px;
    border-bottom: 1px solid #a0a0a0;
}

.strip-main {
    width: 904px;
    padding-bottom: 2px;
    border-right: 1px solid #a0a0a0;
}

.strip-zoom {
    width: 153px;
    padding-bottom: 2px;
    padding-left: 10px;
}

.strip-place {
    width: 1208px;
    border-bottom: 0;
    border-right: 1px solid #c4c4c4;
}

.tb {
    width: 28px;
    height: 28px;
    flex: none;
    display: flex;
    align-items: center;
    justify-content: center;
}

.tb svg {
    width: 22px;
    height: 22px;
    shape-rendering: crispEdges;
}

.tb.pressed {
    background-color: #fafafa;
    border: 1px solid #c8c8c8;
}

.tb.stop {
    border-color: #b4b4b4;
}

.chip-text {
    font-family: "Liberation Sans", sans-serif;
    font-size: 7px;
    font-weight: bold;
    text-anchor: middle;
}

.probe-text {
    font-family: "Liberation Sans", sans-serif;
    font-size: 10px;
    font-weight: bold;
    text-anchor: middle;
    fill: #7a9a70;
}

.probe-text.light {
    fill: #fff;
}

.sep {
    width: 8px;
    height: 26px;
    flex: none;
    background: linear-gradient(#b4b4b4, #b4b4b4) no-repeat 3px 0 / 1px 100%;
}

.sep-wide {
    width: 15px;
    background-position: 2px 0;
}

.sep-combo {
    width: 9px;
}

.sep-tight {
    width: 9px;
    background-position: 5px 0;
}

.sep-gap,
.sep-gap2,
.sep-gap3 {
    height: 32px;
    background-position: 2px 0;
}

.sep-gap {
    width: 14px;
}

.sep-gap2 {
    width: 15px;
    background-position: 4px 0;
}

.sep-gap3 {
    width: 13px;
    background-position: 0 0;
}

.combo {
    width: 186px;
    height: 23px;
    margin-left: 2px;
    flex: none;
    display: flex;
    align-items: center;
    justify-content: space-between;
    padding: 0 5px 0 4px;
    background-color: #e1e1e1;
    border: 1px solid #adadad;
    font-size: 12px;
    color: #222;
}

.combo svg {
    width: 10px;
    height: 6px;
}

.interactive {
    width: 187px;
    height: 28px;
    flex: none;
    display: flex;
    align-items: flex-start;
    gap: 1px;
    padding-left: 4px;
    font-size: 15px;
    line-height: 20px;
    color: #222;
}

.interactive svg {
    width: 14px;
    height: 16px;
    margin-top: 2px;
}

/* main area */
.workspace {
    height: 614px;
    flex: none;
    display: flex;
    border-top: 3px solid #a0a0a0;
}

.toolbox {
    width: 325px;
    flex: none;
    border-right: 1px solid #a8a8a8;
    padding: 1px 0 0 3px;
}

.toolbox-head {
    display: flex;
    align-items: center;
    height: 25px;
}

.toolbox-title {
    width: 274px;
    height: 25px;
    padding-left: 3px;
    line-height: 21px;
    font-size: 15px;
    color: #333;
    background: linear-gradient(90deg, #bccee0, #d6e3f0);
}

.mini {
    width: 16px;
    height: 15px;
    margin-left: 3px;
    border: 1px solid;
    border-color: #fff #777 #777 #fff;
    background-color: #f0f0f0;
    display: flex;
    align-items: center;
    justify-content: center;
}

.mini svg {
    width: 12px;
    height: 10px;
}

.toolbox-box {
    width: 311px;
    height: 550px;
    margin-top: 3px;
    border: 1px solid #a0a0a0;
    border-width: 1px 2px 2px 1px;
    padding: 0 0 0 1px;
}

.toolbox-icons {
    height: 30px;
    display: flex;
    align-items: center;
    gap: 2px;
}

.toolbox-icons .tb-end {
    margin-left: 128px;
}

.tree {
    position: relative;
    height: 517px;
    width: 306px;
    border: 1px solid #a0a0a0;
    border-bottom-width: 1px;
    background-color: #fff;
    padding-top: 2px;
}

.tree-lines {
    position: absolute;
    left: 0;
    top: -1px;
    overflow: visible;
}

.tree-lines .dots {
    fill: none;
    stroke: #666;
    stroke-dasharray: 1 2;
}

.tree-lines .exp {
    fill: #fff;
    stroke: #a8a8a8;
}

.tree-lines .minus {
    fill: none;
    stroke: #3060b0;
}

.tree-row {
    height: 22px;
    display: flex;
    align-items: center;
    white-space: nowrap;
    font-size: 15.500px;
    color: #0a1e46;
}

.tree-row svg {
    flex: none;
    height: 19px;
    shape-rendering: crispEdges;
}

.tree-row span {
    position: relative;
    top: -1px;
    line-height: 22px;
}

.lv0 {
    padding-left: 15px;
}

.lv0 svg {
    width: 17px;
    margin-right: 5px;
}

.lv1 {
    padding-left: 35px;
}

.lv1 svg {
    width: 20px;
    margin-right: 6px;
}

.lv2 {
    padding-left: 60px;
}

.lv2 svg {
    width: 18px;
    margin-right: 4px;
}

.lv2 span {
    padding: 0 1px;
    background-color: #f0f0f0;
}

.lv3 {
    padding-left: 82px;
}

.lv3 svg {
    width: 18px;
    height: 12px;
    margin-right: 7px;
}

.h-scroll {
    display: flex;
    align-items: center;
    background-color: #f0f0f0;
}

.tree-scroll {
    position: absolute;
    left: 0;
    right: 0;
    bottom: 0;
    height: 20px;
    justify-content: space-between;
    padding: 0 8px;
}

.tree-scroll .thumb {
    width: 248px;
    height: 19px;
    background-color: #cdcdcd;
}

.arrow {
    flex: none;
    width: 10px;
    height: 14px;
}

.sheet-tabs {
    display: flex;
}

.tab {
    height: 23px;
    display: flex;
    align-items: center;
    justify-content: center;
    padding-bottom: 2px;
    border: 1px solid #909090;
    border-width: 1px 2px 2px 1px;
    border-radius: 0 0 2px 2px;
    font-size: 14.500px;
    color: #222;
}

.tab.active {
    padding-right: 6px;
    border-top: 0;
    border-left-color: #f0f0f0;
    background-color: #f0f0f0;
}

.toolbox-tabs {
    padding-left: 1px;
}

.toolbox-tabs .tab:nth-child(1) {
    width: 50px;
    height: 25px;
}

.toolbox-tabs .tab:nth-child(2) {
    width: 56px;
    margin-right: 1px;
}

.toolbox-tabs .tab:nth-child(3) {
    width: 70px;
}

.editor {
    flex: 1;
    padding-left: 4px;
    min-width: 0;
}

.canvas-frame {
    position: relative;
    height: 578px;
    margin-top: 1px;
    display: grid;
    grid-template-columns: 1531px 1fr;
    grid-template-rows: 548px 1fr;
    border: 2px solid #6e6e6e;
    padding-top: 1px;
    background-color: #f0f0f0;
    width: 1559px;
}

.canvas {
    grid-column: 1;
    grid-row: 1;
}

.v-scroll {
    grid-column: 2;
    grid-row: 1;
    display: flex;
    flex-direction: column;
    align-items: center;
    width: 19px;
}

.v-scroll .arrow {
    width: 14px;
    height: 10px;
    margin-top: 5px;
}

.v-scroll .arrow-down {
    margin-top: 309px;
}

.v-scroll .thumb {
    width: 19px;
    height: 176px;
    margin-top: 33px;
    background-color: #cdcdcd;
}

.canvas-scroll {
    grid-column: 1 / 3;
    grid-row: 2;
    height: 19px;
    padding-left: 5px;
    box-shadow: 0 1px 0 #dcdcdc;
}

.canvas-scroll .thumb {
    width: 1085px;
    height: 19px;
    margin-left: 316px;
    margin-right: 98px;
    background-color: #cdcdcd;
}

.design-tabs {
    height: 32px;
    align-items: flex-start;
}

.doc-tab {
    width: 102px;
    height: 25px;
    display: flex;
    align-items: center;
    gap: 3px;
    padding-left: 4px;
    border: 1px solid #555;
    border-width: 0 2px 2px 1px;
    border-radius: 0 0 3px 3px;
    font-size: 15px;
    white-space: nowrap;
}

.doc-tab svg {
    width: 20px;
    height: 20px;
    flex: none;
}

.doc-tab.active {
    width: 134px;
    height: 27px;
    gap: 6px;
    padding-left: 6px;
}

.doc-tab.active svg {
    width: 16px;
    height: 13px;
}

.cascade {
    margin-left: auto;
    margin-top: 7px;
    margin-right: 2px;
    width: 18px;
    height: 18px;
    background-color: #fff;
}

.cascade svg {
    width: 18px;
    height: 18px;
    shape-rendering: crispEdges;
}

.instruments {
    width: 32px;
    flex: none;
    display: flex;
    flex-direction: column;
    align-items: center;
    padding: 9px 0 0 3px;
    border-right: 2px solid #c8c8c8;
}

.inst {
    height: 26px;
    flex: none;
    display: flex;
    align-items: center;
}

.inst svg {
    width: 21px;
    height: 20px;
    shape-rendering: crispEdges;
}

.inst-sep {
    width: 28px;
    height: 1px;
    flex: none;
    margin-top: 4px;
    background-color: #a8a8a8;
}

.inst-labview {
    height: 18px;
    margin-top: 9px;
}

.inst-labview svg {
    height: 18px;
}

.inst-arrow {
    width: 5px;
    height: 8px;
    margin: 6px 0 7px;
}

.inst-short {
    height: 16px;
    margin: 8px 0 5px;
}

.inst-short svg {
    height: 16px;
}

.inst-probe {
    margin-top: 3px;
}

.inst-digits {
    font-family: "Liberation Sans", sans-serif;
    font-size: 8px;
    font-weight: bold;
    fill: #20e020;
    text-anchor: middle;
}

.inst-tag {
    font-family: "Liberation Sans", sans-serif;
    font-size: 7px;
    font-weight: bold;
    fill: #0000d0;
    text-anchor: middle;
}

.net-label text {
    font-family: "Liberation Mono", monospace;
    font-size: 23px;
    font-weight: bold;
    fill: #0000ff;
    stroke: none;
}

.part-label text {
    font-family: "Liberation Sans", sans-serif;
    font-size: 26px;
    font-weight: bold;
    fill: #000;
    stroke: none;
}

/* log panel */
.lower {
    height: 267px;
    flex: none;
    display: flex;
    border-top: 2px solid #808080;
}

.lower-side {
    width: 32px;
    flex: none;
    padding: 2px 0 0 7px;
}

.lower-side .mini {
    margin: 0 0 3px;
}

.side-title {
    width: 25px;
    height: 220px;
    margin: 3px 0 0 -5px;
    display: flex;
    align-items: flex-end;
    justify-content: center;
    background: linear-gradient(#d6e3f0, #bccee0);
    font-size: 15px;
    color: #333;
}

.side-title span {
    writing-mode: vertical-rl;
    text-orientation: sideways;
    transform: rotate(180deg);
    line-height: 25px;
    white-space: nowrap;
}

.lower-main {
    width: 1880px;
    padding-top: 6px;
}

.log-box {
    height: 228px;
    padding: 0 0 0 26px;
    border: 2px solid #8c8c8c;
    border-width: 2px 1px 2px 2px;
    background-color: #fff;
    font-size: 15.500px;
    line-height: 24px;
    color: #0a1e46;
}

.log-tabs {
    margin-top: 1px;
}

.log-tabs .tab {
    height: 22px;
    margin-right: 2px;
}

.log-tabs .t-result {
    width: 49px;
    height: 24px;
    margin-right: 0;
}

.log-tabs .t-net {
    width: 46px;
}

.log-tabs .t-3 {
    width: 55px;
}

/* status bar */
.statusbar {
    height: 24px;
    flex: none;
    display: flex;
    align-items: center;
    padding-top: 2px;
    border-top: 1px solid #a0a0a0;
    box-shadow: inset 0 1px 0 #d8d8d8;
    font-size: 15px;
}

.status-help {
    width: 1486px;
    padding-left: 1px;
    flex: none;
    color: #222;
}

.status-cell {
    height: 20px;
    flex: none;
    border-right: 1px solid #d0d0d0;
    line-height: 20px;
}

.c1 {
    width: 123px;
    text-align: right;
    padding-right: 32px;
}

.c2 {
    width: 123px;
}

.c3 {
    width: 123px;
    padding-left: 6px;
}

.c4 {
    width: 64px;
    display: flex;
    align-items: center;
    gap: 2px;
    padding-left: 5px;
    border-right: 0;
}

.c4 i {
    width: 6px;
    height: 13px;
    background-color: #ececec;
    border: 1px solid #b8b8b8;
}
```
